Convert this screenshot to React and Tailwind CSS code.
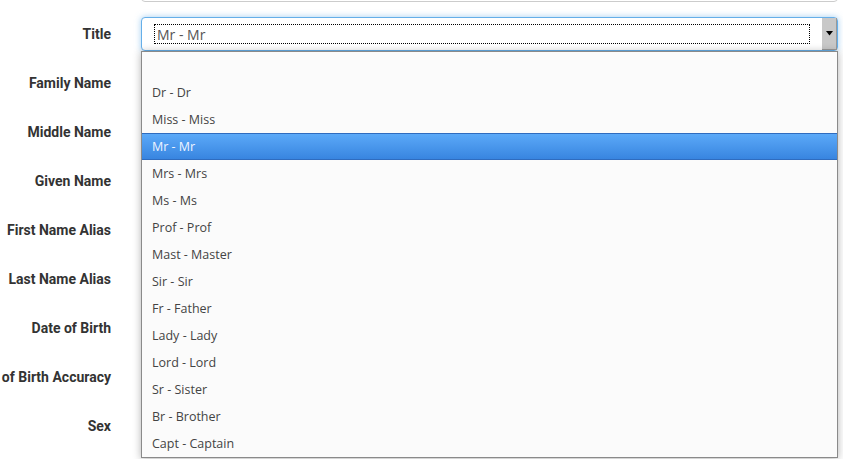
import React from 'react';

const labels = [
  'Family Name',
  'Middle Name',
  'Given Name',
  'First Name Alias',
  'Last Name Alias',
  'Date of Birth',
  'Date of Birth Accuracy',
  'Sex',
];

const options = [
  '',
  'Dr - Dr',
  'Miss - Miss',
  'Mr - Mr',
  'Mrs - Mrs',
  'Ms - Ms',
  'Prof - Prof',
  'Mast - Master',
  'Sir - Sir',
  'Fr - Father',
  'Lady - Lady',
  'Lord - Lord',
  'Sr - Sister',
  'Br - Brother',
  'Capt - Captain',
];

const FieldRow = ({ label, children }) => (
  <div className="flex items-center h-[34px] mb-[15px]">
    <div className="w-[111px] shrink-0 flex justify-end whitespace-nowrap text-[14px] font-bold text-[#333] font-['Roboto',sans-serif]">
      {label}
    </div>
    <div className="ml-[30px] flex-1 h-full relative">{children}</div>
  </div>
);

const TextBox = () => (
  <div className="h-full w-[697px] bg-white border border-[#ccc] rounded" />
);

export default function App() {
  return (
    <div className="w-[843px] h-[459px] bg-white overflow-hidden relative font-['Open_Sans',sans-serif]">
      <div className="mt-[-32px]">
        <FieldRow label="">
          <TextBox />
        </FieldRow>

        {/* Title select (focused, open) */}
        <FieldRow label="Title">
          <div className="h-full w-[697px] bg-white border border-[#66afe9] rounded shadow-[0_0_6px_rgba(102,175,233,0.6)] flex items-stretch relative z-20">
            <div className="flex-1 flex items-center pl-[12px] pr-[12px]">
              <div className="flex-1 h-[20px] border border-dotted border-black flex items-center pl-[2px] text-[14px] text-[#555]">
                Mr - Mr
              </div>
            </div>
            <div className="w-[15px] bg-[#c8c8c8] flex items-center justify-center border-r border-b border-[#9a9a9a]">
              <svg width="7" height="5" viewBox="0 0 7 5">
                <path d="M0 0h7L3.5 4.5z" fill="#000" />
              </svg>
            </div>
          </div>

          {/* Dropdown list */}
          <div className="absolute left-0 top-[34px] w-[697px] bg-[#fbfbfb] border border-[#8a8a8a] shadow-[0_1px_8px_rgba(0,0,0,0.3)] z-30">
            {options.map((o, i) =>
              o === 'Mr - Mr' ? (
                <div
                  key={i}
                  className="h-[27px] flex items-center pt-[2px] pl-[10px] text-[12.5px] text-[#eef4ff] bg-gradient-to-b from-[#5ba9f8] to-[#3885e0] border-y border-[#2f6cbf]"
                >
                  {o}
                </div>
              ) : (
                <div key={i} className="h-[27px] flex items-center pt-[2px] pl-[10px] text-[12.5px] text-[#444]">
                  {o}
                </div>
              )
            )}
          </div>
        </FieldRow>

        {labels.map((l) => (
          <FieldRow key={l} label={l}>
            <TextBox />
          </FieldRow>
        ))}
      </div>
    </div>
  );
}
